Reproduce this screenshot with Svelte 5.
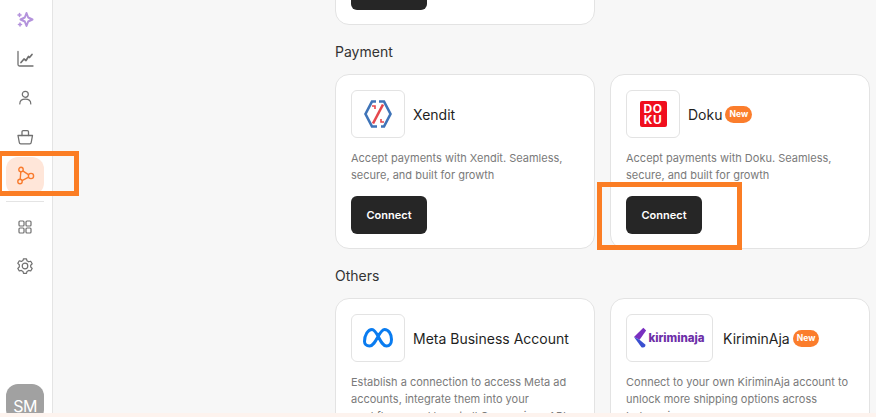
<script>
  const topNav = ["spark", "chart", "user", "bag"]

  const sections = [
    {
      title: "Marketing",
      cards: [{ name: "", logo: "", desc: "", connect: true }],
    },
    {
      title: "Payment",
      cards: [
        { name: "Xendit", logo: "xendit", desc: "Accept payments with Xendit. Seamless, secure, and built for growth", connect: true },
        { name: "Doku", logo: "doku", isNew: true, desc: "Accept payments with Doku. Seamless, secure, and built for growth", connect: true },
      ],
    },
    {
      title: "Others",
      cards: [
        { name: "Meta Business Account", logo: "meta", desc: "Establish a connection to access Meta ad accounts, integrate them into your workflows, and boost all Conversions API" },
        { name: "KiriminAja", logo: "kiriminaja", isNew: true, desc: "Connect to your own KiriminAja account to unlock more shipping options across Indonesia." },
      ],
    },
  ]
</script>

<div class="app">
  <aside class="sidebar">
    {#each topNav as item}
      <div class="nav-item">
        <svg width="20" height="20" viewBox="0 0 20 20" fill="none" stroke="#707070" stroke-width="1.200" stroke-linecap="round" stroke-linejoin="round">
          {#if item === "spark"}
            <path d="M11.500 3 L13.200 7.500 L17.500 9.500 L13.200 11.500 L11.500 16 L9.800 11.500 L5.500 9.500 L9.800 7.500 Z" stroke="#b493dc" stroke-width="2" />
            <path d="M4.500 3.500v3M3 5h3M5 13v3M3.500 14.500h3" stroke="#b493dc" stroke-width="1.600" />
          {:else if item === "chart"}
            <path d="M3 2.500v13a1.500 1.500 0 0 0 1.500 1.500H18" stroke-width="1.300" />
            <path d="M6 13.500l3-3.500 2 1.500 2.500-4 1 1L17 5.500" stroke-width="1.700" />
          {:else if item === "user"}
            <circle cx="10.300" cy="6.300" r="3" />
            <path d="M4.800 16c0-3 2.400-4.800 5.500-4.800s5.500 1.800 5.500 4.800" />
          {:else}
            <path d="M3 8.500h14.500l-1.300 7a1.500 1.500 0 0 1-1.500 1.300H5.800a1.500 1.500 0 0 1-1.500-1.300Z" stroke-width="1.300" />
            <path d="M7 8.500V4.800a1.200 1.200 0 0 1 1.200-1.200h4.100a1.200 1.200 0 0 1 1.200 1.200v3.700" stroke-width="1.300" />
          {/if}
        </svg>
      </div>
    {/each}

    <div class="nav-item active">
      <svg width="20" height="20" viewBox="0 0 20 20" fill="none" stroke="#f97b2e" stroke-width="1.400">
        <circle cx="6" cy="3.500" r="2.200" />
        <circle cx="5" cy="15.500" r="2.200" />
        <circle cx="16" cy="10" r="2.600" />
        <path d="M5.800 5.700 L5.200 13.300M7.800 4.800 L13.800 8.800M7 14.600 L13.700 11.200" />
      </svg>
    </div>

    <div class="divider"></div>

    <div class="nav-item">
      <svg width="20" height="20" viewBox="0 0 20 20" fill="none" stroke="#707070" stroke-width="1.200">
        <rect x="4" y="4" width="5" height="5" rx="1" />
        <rect x="11" y="4" width="5" height="5" rx="1" />
        <rect x="4" y="11" width="5" height="5" rx="1" />
        <rect x="11" y="11" width="5" height="5" rx="1" />
      </svg>
    </div>
    <div class="nav-item">
      <svg width="20" height="20" viewBox="0 0 20 20" fill="none" stroke="#707070" stroke-width="1.200">
        <circle cx="10" cy="10" r="2.800" />
        <path d="M8.500 2.800h3l.5 2 1.700 1 2-.6 1.500 2.600-1.500 1.400v1.800l1.500 1.400-1.500 2.600-2-.6-1.700 1-.5 2h-3l-.5-2-1.700-1-2 .6-1.500-2.600 1.500-1.400V8.800L2.800 7.400l1.500-2.600 2 .6 1.700-1Z" stroke-linejoin="round" />
      </svg>
    </div>

    <div class="avatar">SM</div>
  </aside>

  <main class="main">
    <div class="content">
      {#each sections as section}
        <section>
          <h2>{section.title}</h2>
          <div class="grid">
            {#each section.cards as card}
              <article class="card">
                <div class="head">
                  <div class="logo" class:wide={card.logo === "kiriminaja"}>
                    {#if card.logo === "xendit"}
                      <svg width="28" height="28" viewBox="0 0 28 28" fill="none">
                        <path d="M12 1.500H8L1.500 14 8 26.500h5" stroke="#3f74b8" stroke-width="2.600" />
                        <path d="M17 26.500h3L26.500 14 20 1.500h-5" stroke="#3f74b8" stroke-width="2.600" />
                        <path d="M19 4.500 9 23.500" stroke="#e5484d" stroke-width="2.600" />
                        <path d="M8 6l3 0 0 3M20 22l-3 0 0-3" stroke="#e5484d" stroke-width="1.600" />
                      </svg>
                    {:else if card.logo === "doku"}
                      <div class="doku"><span>DO</span><span>KU</span></div>
                    {:else if card.logo === "meta"}
                      <svg width="32" height="22" viewBox="0 0 32 22" fill="none">
                        <path d="M2.500 14.500C2.500 8 6 2.500 10 2.500c5.500 0 8 16.500 14.500 16.500 3 0 5-2.500 5-6.500 0-5.500-3-10-7-10-5.500 0-8.500 16.500-15 16.500-3 0-5-2-5-4.500" stroke="#0a7cf0" stroke-width="3" stroke-linecap="round" />
                      </svg>
                    {:else if card.logo === "kiriminaja"}
                      <div class="kirimin">
                        <svg width="14" height="22" viewBox="0 0 15 22">
                          <path d="M10 0 0 10l6 3 7-10Z" fill="#7a2fc0" />
                          <path d="M6 13 0 10l8 11c3 1 5-1 4-3Z" fill="#3a4fd0" />
                        </svg>
                        <span>kiriminaja</span>
                      </div>
                    {/if}
                  </div>
                  {#if card.name}
                    <span class="name">{card.name}</span>
                  {/if}
                  {#if card.isNew}
                    <span class="badge">New</span>
                  {/if}
                </div>
                <p class="desc">{card.desc}</p>
                {#if card.connect}
                  <button class="connect">Connect</button>
                {/if}
              </article>
            {/each}
          </div>
        </section>
      {/each}
    </div>
  </main>

  <div class="strip"></div>
  <div class="callout side"></div>
  <div class="callout cta"></div>
</div>

<style>
  :global(body) {
    margin: 0;
    background: #f7f7f7;
  }

  .app {
    position: relative;
    display: flex;
    width: 876px;
    height: 417px;
    overflow: hidden;
    font-family: Inter, "Noto Sans", sans-serif;
    color: #1f1f1f;
  }

  .sidebar {
    box-sizing: border-box;
    flex: none;
    display: flex;
    flex-direction: column;
    align-items: center;
    gap: 1px;
    width: 53px;
    height: 422px;
    padding: 1px 2px 0 0;
    background: #fff;
    border-right: 1px solid #e4e4e4;
  }

  .nav-item {
    display: flex;
    align-items: center;
    justify-content: center;
    width: 38px;
    height: 38px;
    border-radius: 12px;
  }

  .nav-item.active {
    background: #ffe6d9;
  }

  .divider {
    width: 38px;
    height: 1px;
    margin: 5px 0;
    background: #e4e4e4;
  }

  .avatar {
    display: flex;
    align-items: center;
    justify-content: center;
    width: 38px;
    height: 38px;
    margin-top: auto;
    padding-top: 5px;
    box-sizing: border-box;
    border-radius: 12px;
    background: #a1a1a1;
    color: #fff;
    font-size: 16px;
    letter-spacing: -0.500px;
  }

  .main {
    flex: 1;
    min-width: 0;
    padding-left: 282px;
  }

  .content {
    display: flex;
    flex-direction: column;
    gap: 18px;
    margin-top: -181px;
  }

  h2 {
    margin: 0 0 14px;
    font-size: 14px;
    font-weight: 400;
    line-height: 17px;
    color: #333;
  }

  .grid {
    display: grid;
    grid-template-columns: 260px 260px;
    gap: 15px;
  }

  .card {
    box-sizing: border-box;
    height: 175px;
    padding: 15px;
    background: #fff;
    border: 1px solid #e3e3e3;
    border-radius: 14px;
  }

  .head {
    display: flex;
    align-items: center;
    height: 48px;
  }

  .logo {
    box-sizing: border-box;
    flex: none;
    display: flex;
    align-items: center;
    justify-content: center;
    width: 54px;
    height: 48px;
    margin-right: 8px;
    border: 1px solid #e3e3e3;
    border-radius: 6px;
  }

  .logo.wide {
    width: 87px;
    margin-right: 10px;
  }

  .name {
    font-size: 14px;
    color: #1f1f1f;
  }

  .badge {
    margin-left: 3px;
    padding: 0 4px;
    border-radius: 9px;
    background: #fb7d2c;
    color: #fff;
    font-size: 8.500px;
    font-weight: 700;
    line-height: 17px;
  }

  .desc {
    height: 34px;
    margin: 12px 0;
    font-size: 11px;
    line-height: 17px;
    color: #7a7a7a;
  }

  .connect {
    display: block;
    width: 76px;
    height: 38px;
    padding: 0;
    border: 0;
    border-radius: 6px;
    background: #262626;
    color: #fff;
    font: 600 11px Inter, sans-serif;
  }

  .doku {
    display: flex;
    flex-direction: column;
    align-items: center;
    justify-content: center;
    width: 27px;
    height: 26px;
    border-radius: 2px;
    background: #f00f1e;
    color: #fff;
    font-size: 12px;
    font-weight: 700;
    line-height: 11px;
    letter-spacing: 0.500px;
  }

  .kirimin {
    display: flex;
    align-items: center;
    color: #6d2fa8;
    font-size: 11.500px;
    font-weight: 800;
  }

  .strip {
    position: absolute;
    left: 0;
    right: 0;
    bottom: 0;
    height: 4px;
    background: #fdf3ee;
  }

  .callout {
    position: absolute;
    box-sizing: border-box;
    border: 5px solid #fb7d24;
  }

  .callout.side {
    left: -3px;
    top: 151px;
    width: 82px;
    height: 45px;
  }

  .callout.cta {
    left: 597px;
    top: 182px;
    width: 145px;
    height: 68px;
  }
</style>
